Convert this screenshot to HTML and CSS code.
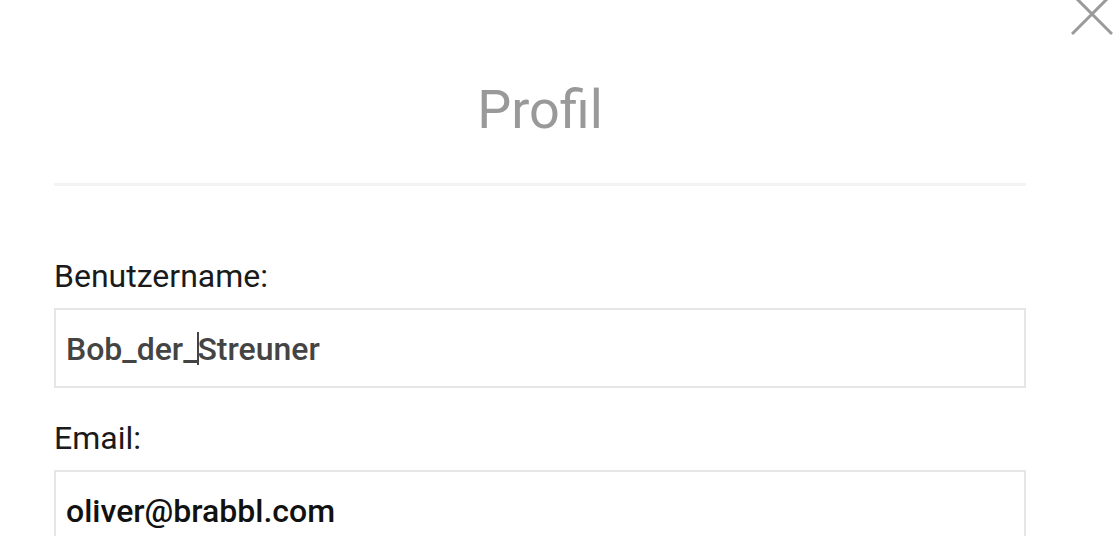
FILE: index.html
```html
<!DOCTYPE html>
<html lang="de">
<head>
    <meta charset="UTF-8">
    <title>Profil</title>
    <link rel="stylesheet" href="styles.css">
</head>
<body>
    <div class="modal">
        <button class="close-btn" aria-label="Schließen">
            <svg width="42" height="42" viewBox="0 0 42 42"><path d="M1 1L41 41M41 1L1 41" stroke="#9a9a9a" stroke-width="3" fill="none"/></svg>
        </button>
        <div class="content">
            <h1 class="title">Profil</h1>
            <div class="divider"></div>

            <div class="field">
                <label class="label">Benutzername:</label>
                <div class="input input-muted">Bob_der_<span class="caret"></span>Streuner</div>
            </div>

            <div class="field">
                <label class="label">Email:</label>
                <div class="input">oliver@brabbl.com</div>
            </div>
        </div>
    </div>
</body>
</html>
```

FILE: styles.css
```css
html, body { margin: 0; padding: 0; background: #fff; overflow: hidden; }
body { font-family: Roboto, "Liberation Sans", sans-serif; color: #1a1a1a; }
.modal { position: relative; width: 1120px; height: 536px; }
.close-btn { position: absolute; top: -7px; left: 1071px; padding: 0; border: none; background: none; cursor: pointer; }
.close-btn svg { display: block; }
.content { width: 972px; margin-left: 54px; padding-top: 78px; }
.title { margin: 0; font-size: 54px; font-weight: 400; line-height: 64px; color: #999; text-align: center; }
.divider { height: 3px; background: #f3f3f3; margin-top: 41px; }
.field { margin-top: 74px; }
.field + .field { margin-top: 34px; }
.label { display: block; font-size: 32px; line-height: 32px; color: #1a1a1a; }
.input { box-sizing: border-box; height: 80px; margin-top: 16px; border: 2px solid #e6e6e6; padding: 1px 10px 0; display: flex; align-items: center; font-size: 32px; font-weight: 500; color: #111; }
.input-muted { color: #444; }
.caret { display: inline-block; width: 2px; height: 33px; background: #444; margin-right: -2px; }
```
